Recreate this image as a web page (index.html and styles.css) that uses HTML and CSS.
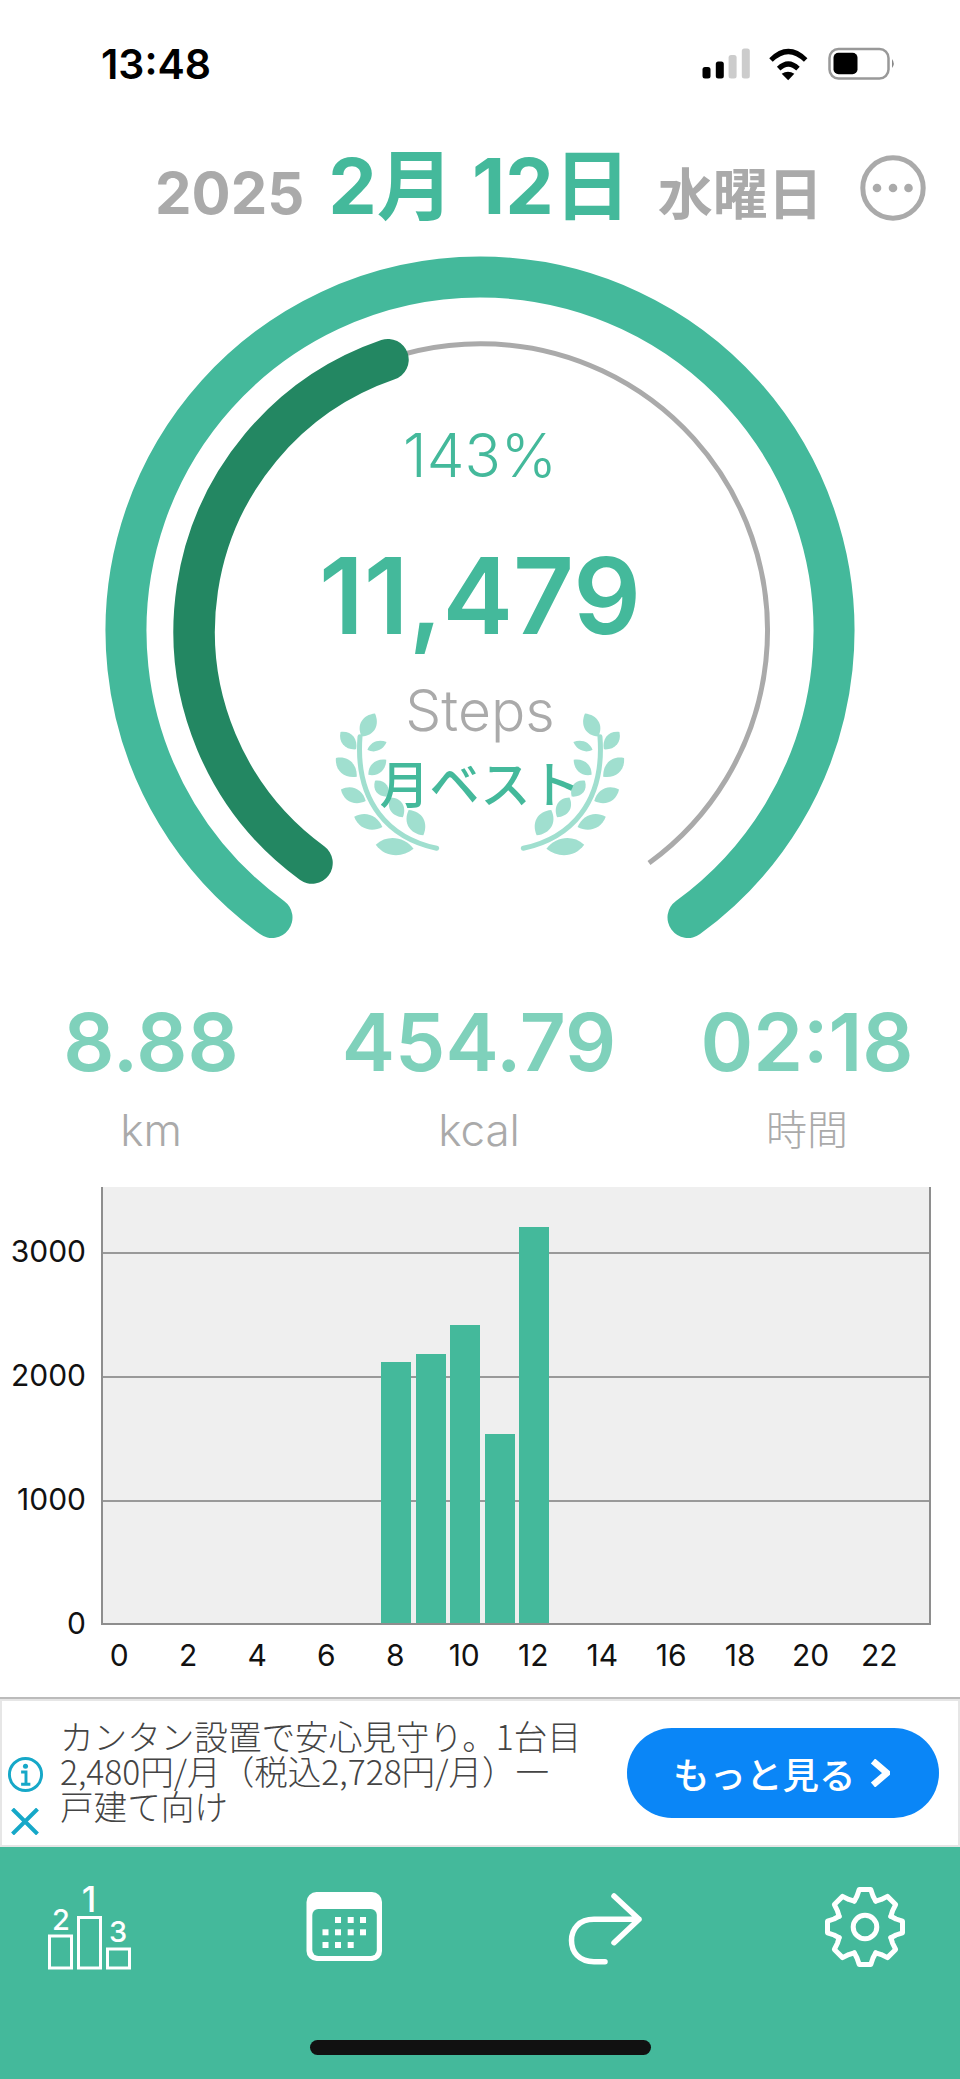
FILE: index.html
```html
<!DOCTYPE html>
<html lang="ja">
<head>
<meta charset="utf-8">
<title>歩数</title>
<link rel="stylesheet" href="styles.css">
</head>
<body>
<div class="page">
  <header class="status">
    <span class="time">13:48</span>
    <div class="status-icons">
      <svg class="ic-signal" viewBox="702 48 48 31"><rect class="on" x="702.5" y="67" width="8" height="11.5" rx="2.5"/><rect class="on" x="715.8" y="61.5" width="8" height="17" rx="2.5"/><rect class="off" x="728.6" y="55" width="8" height="23.5" rx="2.5"/><rect class="off" x="741.8" y="48.5" width="8" height="30" rx="2.5"/></svg>
      <svg class="ic-wifi" viewBox="260 45 135 105"><path class="wifi-arc" d="M275 87Q327 36 379 87"/><path class="wifi-arc" d="M298 113Q327 85 356 113"/><path d="M307 128Q326 116 345 128L326.500 148Z"/></svg>
      <svg class="ic-battery" viewBox="828 47 68 33"><rect class="bat-case" x="829.500" y="49" width="59" height="29.500" rx="9"/><rect x="833.500" y="52.800" width="24" height="21.500" rx="5"/><path class="bat-nub" d="M892 59Q895.500 63.500 892 68Z"/></svg>
    </div>
  </header>

  <section class="date-row">
    <span class="date-year">2025</span>
    <span class="date-main">2月 12日</span>
    <span class="date-week">水曜日</span>
    <svg class="date-more" viewBox="0 0 66 66"><circle class="more-ring" cx="33" cy="33" r="30.200"/><circle cx="17" cy="33" r="4.300"/><circle cx="33" cy="33" r="4.300"/><circle cx="48.500" cy="33" r="4.300"/></svg>
  </section>

  <section class="gauge">
    <svg class="gauge-art" viewBox="0 250 960 750">
      <defs>
        <path id="leaf" d="M-1 0C-.45-1.300.45-1.200 1 0 .45 1.200-.45 1.300-1 0Z"/>
        <g id="laurel">
          <path class="laurel-stem" d="M410 565C270 535 165 430 180 230"/>
          <use href="#leaf" transform="translate(205 195) rotate(-60) scale(40 25)"/>
          <use href="#leaf" transform="translate(145 242) rotate(48) scale(35 21)"/>
          <use href="#leaf" transform="translate(231 258) rotate(-22) scale(31 15)"/>
          <use href="#leaf" transform="translate(139 322) rotate(42) scale(42 24)"/>
          <use href="#leaf" transform="translate(232 322) rotate(-40) scale(35 19)"/>
          <use href="#leaf" transform="translate(160 406) rotate(25) scale(41 23)"/>
          <use href="#leaf" transform="translate(245 386) rotate(50) scale(31 20)"/>
          <use href="#leaf" transform="translate(205 486) rotate(20) scale(45 23)"/>
          <use href="#leaf" transform="translate(290 442) rotate(58) scale(35 22)"/>
          <use href="#leaf" transform="translate(348 488) rotate(60) scale(44 27)"/>
          <use href="#leaf" transform="translate(284 560) rotate(6) scale(57 27)"/>
        </g>
      </defs>
      <path class="arc-outer" d="M272 917.500A354 354 0 1 1 688 917.500"/>
      <path class="arc-track" d="M312 863A287 287 0 1 1 649 863"/>
      <path class="arc-done" d="M312 863A287 287 0 0 1 388 359.700"/>
      <g class="laurels" transform="translate(300 660) scale(.3333)">
        <use href="#laurel"/>
        <use href="#laurel" transform="translate(1080 0) scale(-1 1)"/>
      </g>
    </svg>
    <div class="gauge-text">
      <div class="g-pct">143%</div>
      <div class="g-steps">11,479</div>
      <div class="g-unit">Steps</div>
      <div class="g-best">月ベスト</div>
    </div>
  </section>

  <section class="stats">
    <div class="stat"><div class="stat-val">8.88</div><div class="stat-unit">km</div></div>
    <div class="stat"><div class="stat-val">454.79</div><div class="stat-unit">kcal</div></div>
    <div class="stat"><div class="stat-val">02:18</div><div class="stat-unit stat-unit-ja">時間</div></div>
  </section>

  <section class="chart">
    <div class="y-axis">
      <span>3000</span><span>2000</span><span>1000</span><span>0</span>
    </div>
    <div class="plot">
      <div class="bar-slot b8"><div class="bar" style="height:261px"></div></div>
      <div class="bar-slot b9"><div class="bar" style="height:269px"></div></div>
      <div class="bar-slot b10"><div class="bar" style="height:298px"></div></div>
      <div class="bar-slot b11"><div class="bar" style="height:189px"></div></div>
      <div class="bar-slot b12"><div class="bar" style="height:396px"></div></div>
    </div>
    <div class="x-axis">
      <span>0</span><span>2</span><span>4</span><span>6</span><span>8</span><span>10</span><span>12</span><span>14</span><span>16</span><span>18</span><span>20</span><span>22</span>
    </div>
  </section>

  <section class="ad">
    <div class="ad-marks">
      <svg class="ad-info" viewBox="0 0 38 38"><circle class="ad-stroke" cx="19" cy="19" r="16.500"/><circle class="ad-dot" cx="19" cy="10.500" r="2.600"/><path class="ad-stroke" d="M14.500 16.500H19.500V29M14.500 29H24"/></svg>
      <svg class="ad-close" viewBox="0 0 28 27"><path class="ad-stroke ad-x" d="M1.500 1L26.500 26M26.500 1L1.500 26"/></svg>
    </div>
    <p class="ad-copy">カンタン設置で安心見守り。1台目<br>2,480円/月（税込2,728円/月）一<br>戸建て向け</p>
    <div class="ad-btn"><span>もっと見る</span><svg class="ad-chev" viewBox="0 0 20 28"><path d="M3 2L17 14 3 26"/></svg></div>
  </section>

  <nav class="tabbar">
    <div class="tabs">
      <svg class="tab tab-rank" viewBox="46 1870 87 101">
        <rect x="49.500" y="1936" width="22" height="32"/>
        <rect x="78.500" y="1917.500" width="22" height="50.500"/>
        <rect x="107.500" y="1949" width="22" height="19"/>
        <text class="rk1" x="89" y="1911.500">1</text>
        <text class="rk2" x="61" y="1930">2</text>
        <text class="rk2" x="118" y="1942">3</text>
      </svg>
      <svg class="tab tab-cal" viewBox="306 1891 77 71">
        <rect class="cal-body" x="306.500" y="1892" width="75.500" height="69" rx="10"/>
        <rect class="cal-face" x="312.300" y="1909" width="64.500" height="47" rx="6"/>
        <g class="cal-dots">
          <rect x="335" y="1917" width="6" height="6"/><rect x="347.700" y="1917" width="6" height="6"/><rect x="360" y="1917" width="6" height="6"/>
          <rect x="322.500" y="1929.300" width="6" height="6"/><rect x="335" y="1929.300" width="6" height="6"/><rect x="347.700" y="1929.300" width="6" height="6"/><rect x="360" y="1929.300" width="6" height="6"/>
          <rect x="322.500" y="1942" width="6" height="6"/><rect x="335" y="1942" width="6" height="6"/><rect x="347.700" y="1942" width="6" height="6"/>
        </g>
      </svg>
      <svg class="tab tab-share" viewBox="566 1891 78 76">
        <path d="M614 1896L639 1919.300 614 1942.700M639 1919.300H594C579 1919.300 571.500 1929 571.500 1940.500S579 1961.700 594 1961.700H605"/>
      </svg>
      <svg class="tab tab-gear" viewBox="-42 -42 84 84">
        <defs><path id="tooth" d="M-10.700-25.900L-8-31-5.800-37.500H5.800L8-31 10.700-25.900"/></defs>
        <use href="#tooth"/><use href="#tooth" transform="rotate(45)"/><use href="#tooth" transform="rotate(90)"/><use href="#tooth" transform="rotate(135)"/><use href="#tooth" transform="rotate(180)"/><use href="#tooth" transform="rotate(225)"/><use href="#tooth" transform="rotate(270)"/><use href="#tooth" transform="rotate(315)"/>
        <circle r="11.800"/>
      </svg>
    </div>
    <div class="home-bar"></div>
  </nav>
</div>
</body>
</html>
```

FILE: styles.css
```css
* { box-sizing: border-box; }
html, body { margin: 0; padding: 0; background: #fff; }
body { font-family: Inter, "Noto Sans CJK JP", sans-serif; }
.page { width: 960px; height: 2079px; display: flex; flex-direction: column; overflow: hidden; }

/* status bar */
.status { height: 130px; padding: 40px 0 0 101px; display: flex; align-items: flex-start; }
.time { font-size: 41px; line-height: 48px; font-weight: 600; color: #000; }
.status-icons { margin-left: auto; margin-right: 64px; display: flex; align-items: flex-start; margin-top: 8px; }
.ic-signal { width: 48px; height: 31px; display: block; }
.ic-signal .on { fill: #000; }
.ic-signal .off { fill: #ccc; }
.ic-wifi { width: 45px; height: 35px; margin: -2px 0 0 16px; display: block; }
.wifi-arc { fill: none; stroke: #000; stroke-width: 15; stroke-linecap: butt; }
.ic-battery { width: 68px; height: 33px; margin: -1px 0 0 17px; display: block; }
.bat-case { fill: #fff; stroke: #999; stroke-width: 2.500; }
.bat-nub { fill: #888; }

/* date */
.date-row { height: 120px; display: flex; align-items: baseline; padding: 6px 0 0 155px; color: #aaa; }
.date-year { font-size: 58px; line-height: 100px; font-weight: 700; }
.date-main { font-size: 77px; line-height: 100px; font-weight: 700; color: #44b99b; margin-left: 24px; }
.date-week { font-size: 55px; line-height: 100px; font-weight: 700; margin-left: 27px; font-family: "Noto Sans CJK JP", sans-serif; }
.date-more { width: 66px; height: 66px; align-self: flex-start; margin: 19px 0 0 37px; fill: #aaa; }
.more-ring { fill: none; stroke: #aaa; stroke-width: 5; }

/* gauge */
.gauge { height: 750px; display: grid; }
.gauge > * { grid-area: 1 / 1; }
.gauge-art { width: 960px; height: 750px; display: block; }
.arc-outer, .arc-track, .arc-done { fill: none; }
.arc-outer { stroke: #44b99b; stroke-width: 41; stroke-linecap: round; }
.arc-track { stroke: #aaa; stroke-width: 5; }
.arc-done { stroke: #238762; stroke-width: 41.500; stroke-linecap: round; }
.laurels { fill: #a0dfcf; }
.laurel-stem { fill: none; stroke: #a0dfcf; stroke-width: 15; stroke-linecap: round; }
.gauge-text { display: flex; flex-direction: column; align-items: center; padding-top: 175px; }
.g-pct { font-size: 60px; line-height: 60px; font-weight: 350; color: #44b99b; }
.g-steps { font-size: 106px; line-height: 106px; font-weight: 600; color: #44b99b; margin-top: 58px; }
.g-unit { font-size: 57px; line-height: 56px; font-weight: 350; color: #aaa; margin-top: 34px; }
.g-best { font-size: 50px; line-height: 50px; font-weight: 500; color: #44b99b; margin-top: 17px; font-family: "Noto Sans CJK JP", sans-serif; }

/* stats */
.stats { height: 187px; display: flex; justify-content: space-between; padding: 0 43px 0 41px; }
.stat { width: 220px; display: flex; flex-direction: column; align-items: center; }
.stat-val { font-size: 80px; line-height: 78px; font-weight: 600; color: #7fd1bb; margin-top: 3px; }
.stat-unit { font-size: 44px; line-height: 50px; font-weight: 350; color: #aaa; margin-top: 24px; }
.stat-unit-ja { font-size: 41px; font-weight: 300; }

/* chart */
.chart { height: 510px; display: grid; grid-template-columns: 102px 828px; grid-template-rows: 438px 1fr; align-content: start; }
.y-axis { display: flex; flex-direction: column; justify-content: flex-end; gap: 90px; margin-bottom: -15px; align-items: flex-end; padding-right: 16px; }
.y-axis span { font-size: 30px; line-height: 34px; color: #111; }
.plot {
  display: grid; grid-template-columns: repeat(24, 34.5px); align-items: end;
  background: repeating-linear-gradient(to top, #efefef 0 121px, #999 121px 123px, #efefef 123px 124px);
  border-left: 2px solid #8e8e8e; border-right: 2px solid #8e8e8e; border-bottom: 2px solid #8e8e8e;
  margin-left: -1px; width: 830px;
}
.bar-slot { grid-row: 1; padding: 0 2.450px; align-self: end; }
.b8 { grid-column: 9; } .b9 { grid-column: 10; } .b10 { grid-column: 11; } .b11 { grid-column: 12; } .b12 { grid-column: 13; }
.bar { background: #44b99b; }
.x-axis { grid-column: 2; display: grid; grid-template-columns: repeat(12, 69px); padding-top: 13px; }
.x-axis span { width: 34.500px; text-align: center; font-size: 30px; line-height: 34px; color: #111; }

/* ad */
.ad { height: 150px; display: flex; align-items: center; background: #fff; border-top: 2px solid #bbb; box-shadow: inset 2px 2px 0 #e6e6e6, inset -2px -2px 0 #e6e6e6; }
.ad-marks { width: 60px; align-self: stretch; display: flex; flex-direction: column; align-items: center; padding: 57px 10px 0 0; flex: none; }
.ad-info { width: 37px; height: 37px; display: block; }
.ad-close { width: 28px; height: 27px; margin-top: 15px; display: block; }
.ad-stroke { fill: none; stroke: #16a8c8; stroke-width: 3; }
.ad-x { stroke-width: 4; }
.ad-dot { fill: #16a8c8; }
.ad-copy { margin: -5px 0 0; width: 567px; font-family: "Noto Sans CJK JP", sans-serif; font-size: 33.600px; line-height: 35px; font-weight: 300; color: #444; flex: none; }
.ad-btn { width: 312px; height: 90px; border-radius: 45px; background: #0a86f7; display: flex; align-items: center; color: #fff; padding-left: 46px; font-family: "Noto Sans CJK JP", sans-serif; font-size: 36.500px; font-weight: 500; flex: none; }
.ad-chev { width: 20px; height: 28px; margin-left: 14px; fill: none; stroke: #fff; stroke-width: 6.500; }

/* tab bar */
.tabbar { flex: 1; background: #44b99b; display: flex; flex-direction: column; }
.tabs { display: flex; align-items: flex-start; padding: 38px 0 0 46px; }
.tab { display: block; fill: none; stroke: #fff; }
.tab-rank { width: 87px; height: 101px; margin-top: -15px; stroke-width: 3; }
.tab-rank text { stroke: none; fill: #fff; text-anchor: middle; font-weight: 500; }
.rk1 { font-size: 35px; }
.rk2 { font-size: 29px; }
.tab-cal { width: 77px; height: 71px; margin: 6px 0 0 173px; stroke: none; }
.cal-body, .cal-dots { fill: #fff; }
.cal-face { fill: #44b99b; }
.tab-share { width: 78px; height: 76px; margin: 6px 0 0 183px; stroke-width: 5.500; stroke-linecap: round; stroke-linejoin: round; }
.tab-gear { width: 84px; height: 84px; margin: 0 0 0 179px; stroke-width: 5; stroke-linecap: round; stroke-linejoin: round; }
.home-bar { width: 341px; height: 15px; border-radius: 8px; background: #111; margin: auto auto 24px; }
```
